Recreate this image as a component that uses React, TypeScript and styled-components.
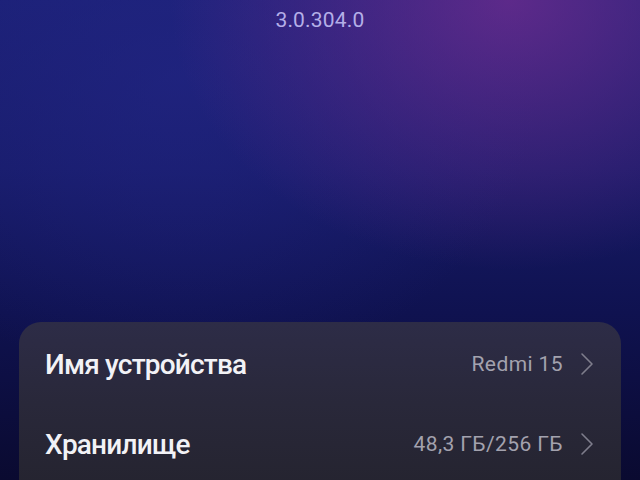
import styled, { createGlobalStyle } from "styled-components";

const GlobalStyle = createGlobalStyle`
  html, body {
    margin: 0;
    padding: 0;
    height: 100%;
    overflow: hidden;
  }
  body {
    font-family: Roboto, "Noto Sans", sans-serif;
    background: #0b0b30;
  }
`;

interface InfoRowProps {
  label: string;
  value: string;
}

const Chevron = () => (
  <ChevronIcon viewBox="0 0 14 24" width="14" height="24">
    <path d="M2 2 L12 12 L2 22" fill="none" stroke="currentColor" strokeWidth="1.6" strokeLinecap="round" strokeLinejoin="round" />
  </ChevronIcon>
);

const InfoRow = ({ label, value }: InfoRowProps) => (
  <Row>
    <Label>{label}</Label>
    <ValueWrap>
      <Value>{value}</Value>
      <Chevron />
    </ValueWrap>
  </Row>
);

const App = () => {
  return (
    <Screen>
      <GlobalStyle />
      <Header>
        <Version>3.0.304.0</Version>
      </Header>
      <Card>
        <InfoRow label="Имя устройства" value="Redmi 15" />
        <InfoRow label="Хранилище" value="48,3 ГБ/256 ГБ" />
      </Card>
    </Screen>
  );
};

const Screen = styled.div`
  width: 640px;
  height: 480px;
  overflow: hidden;
  display: flex;
  flex-direction: column;
  background:
    radial-gradient(ellipse 340px 270px at 510px 0px, rgba(115, 45, 145, 0.75), rgba(90, 40, 140, 0) 100%),
    radial-gradient(ellipse 360px 300px at 180px 80px, rgba(35, 38, 135, 0.6), rgba(30, 30, 120, 0) 100%),
    linear-gradient(180deg, #1b2075 0%, #171b68 35%, #0f1250 65%, #0a0a30 100%);
`;

const Header = styled.div`
  height: 322px;
  display: flex;
  justify-content: center;
  flex-shrink: 0;
`;

const Version = styled.div`
  margin-top: 6px;
  font-size: 21px;
  line-height: 28px;
  color: #b4afe8;
  letter-spacing: 0.2px;
`;

const Card = styled.div`
  margin: 0 19px;
  padding-top: 2px;
  border-radius: 22px 22px 0 0;
  background: linear-gradient(180deg, #2d2c47 0%, #29283a 50%, #252430 100%);
  flex: 1;
`;

const Row = styled.div`
  height: 80px;
  display: flex;
  align-items: center;
  justify-content: space-between;
  padding: 0 27px 0 26px;
`;

const Label = styled.span`
  font-size: 28px;
  font-weight: 500;
  letter-spacing: -0.8px;
  color: #f2f2f6;
`;

const ValueWrap = styled.div`
  display: flex;
  align-items: center;
  gap: 17px;
`;

const Value = styled.span`
  font-size: 21px;
  letter-spacing: 0.4px;
  color: #a3a2ae;
`;

const ChevronIcon = styled.svg`
  color: #7e7d8c;
`;

export default App;
